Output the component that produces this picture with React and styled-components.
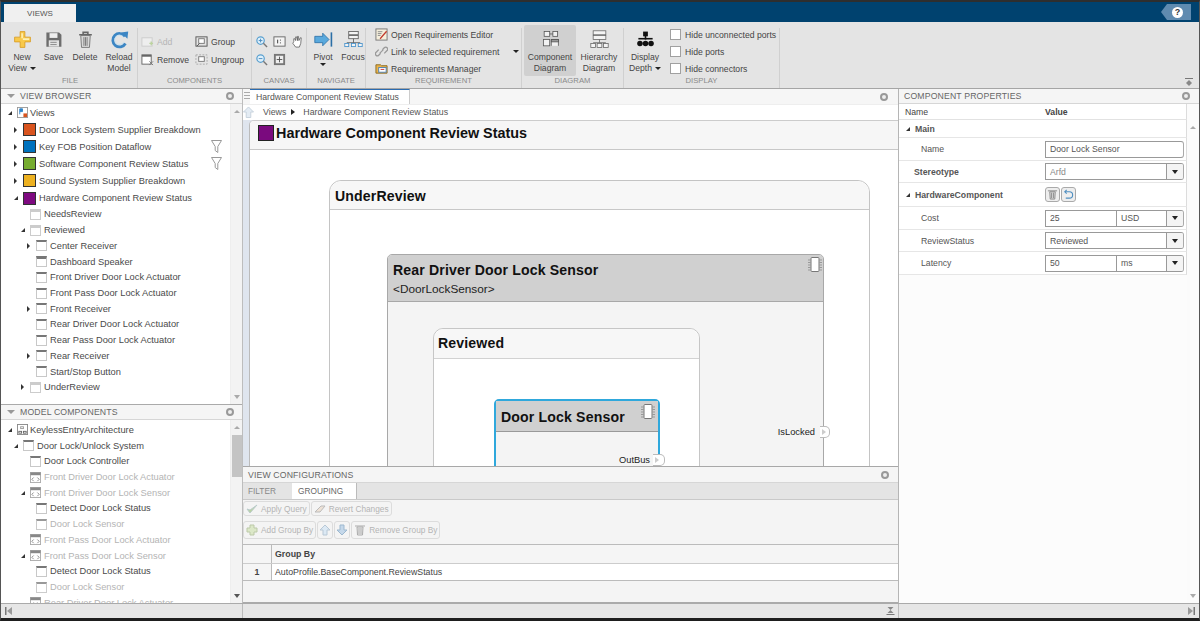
import React from "react";
import styled, { createGlobalStyle } from "styled-components";

const Global = createGlobalStyle`
  html, body { margin: 0; padding: 0; background: #222; overflow: hidden; }
  * { box-sizing: border-box; }
`;

const Page = styled.div`
  width: 1200px; height: 621px; overflow: hidden;
  display: flex; flex-direction: column;
  border-top: 2px solid #2e2e2e; border-bottom: 3px solid #1e1e1e;
  border-left: 1px solid #555; border-right: 1px solid #555;
  font-family: "Liberation Sans", Arial, sans-serif; font-size: 9.3px; color: #3c3c3c;
  background: #fff;
`;
const TitleBar = styled.div`
  height: 20px; background: #00426f; display: flex; align-items: flex-end; justify-content: space-between;
  flex: none; padding: 0 8px 0 3px;
`;
const RibbonTab = styled.div`
  width: 72px; height: 18px; background: #f0f0f0; color: #555; font-size: 8px;
  display: flex; align-items: center; justify-content: center;
`;
const Help = styled.div`
  width: 30px; height: 16px; margin-bottom: 2px; background: #5f8bb0;
  clip-path: polygon(6px 0, 100% 0, 100% 100%, 6px 100%, 0 50%);
  display: flex; align-items: center; justify-content: center; padding-left: 3px;
`;
const HelpDot = styled.div`
  width: 11px; height: 11px; border-radius: 50%; background: #fff; color: #333; font-size: 9px; font-weight: bold;
  display: flex; align-items: center; justify-content: center;
`;
const Ribbon = styled.div`
  height: 67px; flex: none; display: flex; background: #e4e4e4; border-bottom: 1px solid #a5a5a5;
  padding-left: 2px; position: relative;
`;
const Group = styled.div`
  width: ${p => p.$w}px; flex: none; display: flex; flex-direction: column;
  border-right: 1px solid #d0d0d0;
  margin-top: 6px;
`;
const GroupBody = styled.div`
  flex: 1; display: flex; padding: ${p => p.$pad || "0"}; gap: ${p => p.$gap || 0}px; min-height: 0;
`;
const GroupLabel = styled.div`
  height: 12px; flex: none; text-align: center; color: #8a8a8a; font-size: 7.7px; line-height: 10px;
`;
const BigBtn = styled.div`
  width: ${p => p.$w}px; flex: none; display: flex; flex-direction: column; align-items: center;
  text-align: center; line-height: 11px; font-size: 8.6px; border-radius: 2px; color: #444;
  margin-top: ${p => p.$active ? "-3px" : "0"};
  padding-top: ${p => p.$active ? "5px" : "2px"};
  height: ${p => p.$active ? "51px" : "auto"};
  background: ${p => p.$active ? "#d0d0d0" : "transparent"};
  svg { height: 19px; width: 21px; margin-bottom: 3px; flex: none; }
`;
const Caret = styled.span`
  display: inline-block; width: 0; height: 0; border-left: 3px solid transparent; border-right: 3px solid transparent;
  border-top: 3px solid #222; margin-left: ${p => p.$gap ?? 3}px; vertical-align: middle;
`;
const SmallCol = styled.div`
  display: flex; flex-direction: column; gap: ${p => p.$gap ?? 5}px; padding-top: ${p => p.$top ?? 6}px;
  ${p => p.$w ? `width: ${p.$w}px;` : ""} flex: none;
`;
const SmallBtn = styled.div`
  display: flex; align-items: center; height: 13px; flex: none; gap: 3px; white-space: nowrap; font-size: 8.65px;
  color: ${p => p.$off ? "#b5b5b5" : "#444"};
  svg { width: 13px; height: 13px; flex: none; }
`;
const CanvasTools = styled.div`
  display: grid; grid-template-columns: repeat(3, 18px); grid-auto-rows: 18px; padding: 4px 0 0 0; align-items: center; justify-items: center;
  svg { width: 13px; height: 13px; }
`;
const Checkbox = styled.span`
  width: 11px; height: 11px; background: #fff; border: 1px solid #a0a0a0; flex: none; margin-right: 1px;
`;
const Collapse = styled.div`
  position: absolute; right: 6px; bottom: 2px; width: 8px; height: 8px;
  svg { display: block; }
`;

const Main = styled.div`
  flex: 1; display: flex; min-height: 0;
`;
const LeftCol = styled.div`
  width: 242px; flex: none; display: flex; flex-direction: column; border-right: 1px solid #bdbdbd;
`;
const Panel = styled.div`
  height: ${p => p.$h ? p.$h + "px" : "auto"}; flex: ${p => p.$h ? "none" : 1}; min-height: 0;
  display: flex; flex-direction: column; overflow: hidden; background: #fff;
  border-bottom: ${p => p.$line ? "1px solid #aaa" : "none"};
`;
const PanelHead = styled.div`
  height: ${p => p.$h || 15}px; flex: none; display: flex; align-items: center; background: #f5f5f5; border-bottom: 1px solid #d6d6d6;
  color: #666; font-size: 8.7px; letter-spacing: 0.15px; padding: 0 ${p => p.$right ?? 8}px 0 ${p => p.$left ?? 6}px;
`;
const HeadTri = styled.span`
  width: 0; height: 0; border-left: 4px solid transparent; border-right: 4px solid transparent; border-top: 4px solid #999; margin-right: 5px;
`;
const Gear = styled.span`
  width: 8px; height: 8px; border-radius: 50%; border: 2px solid #999; background: #eee; margin-left: auto; flex: none; align-self: center;
`;
const TreeWrap = styled.div`
  flex: 1; display: flex; min-height: 0; overflow: hidden;
`;
const Tree = styled.div`
  flex: 1; min-width: 0; overflow: hidden; padding-top: ${p => p.$top || 0}px;
`;
const Row = styled.div`
  height: ${p => p.$tall ? 17.1 : 15.72}px; display: flex; align-items: center; white-space: nowrap;
  padding-left: ${p => p.$pad}px; padding-right: 5px;
  color: ${p => p.$off ? "#b4b4b4" : "#4a4a4a"}; font-size: 9.3px;
`;
const Arrow = styled.span`
  width: 9px; flex: none; height: 6px; display: flex; align-items: center;
  &::before {
    content: ""; display: ${p => p.$dir ? "block" : "none"};
    ${p => p.$dir === "open"
      ? "border-bottom: 4px solid #333; border-left: 4px solid transparent;"
      : "border-left: 3px solid #333; border-top: 3px solid transparent; border-bottom: 3px solid transparent;"}
  }
`;
const Swatch = styled.span`
  width: 13px; height: 13px; background: ${p => p.$c}; border: 1px solid #333; flex: none; margin-right: 3px;
`;
const CompIcon = styled.span`
  width: 11px; height: 11px; flex: none; margin-right: 3px; background: #fff; border: 1px solid ${p => p.$off ? "#ccc" : "#c8c8c8"};
  border-top: ${p => p.$heavy ? 3 : 2}px solid ${p => p.$off ? "#999" : "#777"};
`;
const ViewIcon = styled.span`
  width: 11px; height: 11px; flex: none; margin-right: 3px; background: #fff; border: 1px solid #ccc; border-top-width: 3px; border-top-color: #ccc;
`;
const SvgSlot = styled.span`
  width: 11px; height: 11px; flex: none; margin-right: ${p => p.$gap ?? 2}px; display: flex;
  svg { width: 11px; height: 11px; }
`;
const FilterSlot = styled.span`
  margin-left: auto; display: flex; margin-right: 3px;
  svg { width: 11px; height: 13px; }
`;
const Scroll = styled.div`
  width: 12px; flex: none; background: #f3f3f3; display: flex; flex-direction: column; align-items: center; padding-top: 6px; border-left: 1px solid #eee;
`;
const ScrollUp = styled.span`
  width: 0; height: 0; border-left: 3px solid transparent; border-right: 3px solid transparent; border-bottom: 3px solid #aaa; flex: none;
`;
const ScrollThumb = styled.div`
  width: 10px; height: 42px; background: #c4c4c4; margin-top: 6px; flex: none;
`;
const ScrollDown = styled.span`
  margin-top: auto; margin-bottom: 5px; width: 0; height: 0; border-left: 3px solid transparent; border-right: 3px solid transparent; border-top: 4px solid ${p => p.$c || "#555"}; flex: none;
`;

const CenterCol = styled.div`
  width: 655px; flex: none; display: flex; flex-direction: column; min-height: 0;
`;
const TabBar = styled.div`
  height: 16px; flex: none; display: flex; background: #f6f6f6; align-items: stretch; padding-right: 10px; border-bottom: 1px solid #eee;
`;
const Grip = styled.span`
  width: 6px; flex: none; margin: 3px 0 3px 1px; background: repeating-linear-gradient(#aaa 0 1px, transparent 1px 3px);
`;
const DocTab = styled.div`
  width: 160px; background: #fff; border-top: 1px solid #2a6bb0; border-right: 1px solid #ccc; padding-left: 6px; display: flex; align-items: center; color: #555; font-size: 8.7px; white-space: nowrap;
`;
const CrumbBar = styled.div`
  height: 15px; flex: none; display: flex; align-items: center; background: #fff; color: #555; font-size: 8.8px; gap: 5px; padding-bottom: 2px;
  svg { width: 11px; height: 12px; margin-right: 4px; flex: none; }
`;
const CrumbArrow = styled.span`
  border-left: 4px solid #222; border-top: 3px solid transparent; border-bottom: 3px solid transparent; margin-right: 3px;
`;
const CanvasFrame = styled.div`
  flex: 1; min-height: 0; overflow: hidden; display: flex; background: #dfe5ee;
  padding-left: 6px; border-bottom: 1px solid #a8a8a8;
`;
const CanvasInner = styled.div`
  flex: 1; overflow: hidden; background: #fff; border-left: 1px solid #bbb; border-top: 1px solid #ccc; border-top-left-radius: 5px;
`;
const DiagramHead = styled.div`
  height: 29px; background: #f6f6f6; border-bottom: 1px solid #c8c8c8; display: flex; align-items: center; padding: 0 0 4px 8px; gap: 2px;
  color: #111; font-weight: bold; font-size: 14.4px;
`;
const HeadSwatch = styled.span`
  width: 16px; height: 16px; background: #7a0a7e; border: 1px solid #222; flex: none;
`;
const Stage = styled.div`
  padding: 30px 0 0 79px;
`;
const Box = styled.div`
  position: relative; background: ${p => p.$bg};
  margin: ${p => p.$m || "0"}; width: ${p => p.$w}px; min-height: ${p => p.$min || 0}px;
  border: ${p => p.$bw || 1}px solid ${p => p.$line};
  border-radius: ${p => p.$r}px ${p => p.$r}px 0 0;
`;
const BoxHead = styled.div`
  height: ${p => p.$h}px; background: ${p => p.$bg}; border-bottom: 1px solid ${p => p.$line};
  border-radius: ${p => p.$r || 0}px ${p => p.$r || 0}px 0 0;
  padding: ${p => p.$pad}; color: #111; position: relative;
`;
const BoxTitle = styled.div`
  font-weight: bold; font-size: 14.1px; line-height: 16px; letter-spacing: 0.15px;
`;
const BoxSub = styled.div`
  font-size: 11.8px; margin-top: 4px; color: #222;
`;
const Chip = styled.span`
  position: absolute; right: ${p => p.$r}px; top: ${p => p.$t}px;
  svg { display: block; width: 14px; height: 15px; }
`;
const Port = styled.div`
  position: absolute; top: ${p => p.$t}px; right: ${p => p.$out}px; display: flex; align-items: center; gap: ${p => p.$gap}px; font-size: 9.3px; color: #222;
`;
const PortTab = styled.span`
  width: ${p => p.$w}px; height: 12px; background: #fff; border: 1px solid #bbb; border-left: none; border-radius: 0 5px 5px 0; display: flex; align-items: center; padding-left: 2px;
  &::before { content: ""; border-left: 4px solid #ccc; border-top: 3px solid transparent; border-bottom: 3px solid transparent; }
`;

const ConfigPanel = styled.div`
  height: 136px; flex: none; display: flex; flex-direction: column; background: #f4f4f4; border-bottom: 1px solid #aaa;
`;
const ConfigTabs = styled.div`
  height: 17px; flex: none; display: flex; background: #e4e4e4; border-bottom: 1px solid #c9c9c9; font-size: 8.3px;
`;
const ConfigTab = styled.div`
  width: ${p => p.$w}px; display: flex; align-items: center; padding-left: ${p => p.$pad}px;
  color: ${p => p.$on ? "#666" : "#888"}; background: ${p => p.$on ? "#fff" : "#e4e4e4"};
  border-right: ${p => p.$on ? "1px solid #bbb" : "none"};
`;
const ToolRow = styled.div`
  display: flex; height: ${p => p.$h}px; margin-top: ${p => p.$top || 0}px; gap: 1px; flex: none;
`;
const GhostBtn = styled.div`
  height: 100%; display: flex; align-items: center; gap: ${p => p.$gap ?? 3}px; padding: 0 ${p => p.$pad ?? 2}px; color: #b4b4b4; border: 1px solid #dcdcdc; border-radius: 3px; white-space: nowrap; font-size: 8.3px;
  svg { width: 12px; height: 12px; flex: none; }
`;
const GroupTable = styled.div`
  margin-top: 5px; border-top: 1px solid #bbb; border-bottom: 1px solid #bbb; background: #fff; flex: none;
`;
const GRow = styled.div`
  display: flex; height: ${p => p.$h}px; background: ${p => p.$head ? "#f5f5f5" : "#fff"}; align-items: stretch;
  border-bottom: ${p => p.$head ? "1px solid #ccc" : "none"}; font-size: 8.8px; color: #444;
`;
const GIndex = styled.div`
  width: 29px; border-right: 1px solid #bbb; background: #f5f5f5; display: flex; align-items: center; justify-content: center; font-weight: bold;
`;
const GCell = styled.div`
  flex: 1; display: flex; align-items: center; padding-left: 3px; font-weight: ${p => p.$bold ? "bold" : "normal"};
`;

const RightCol = styled.div`
  flex: 1; min-width: 0; display: flex; flex-direction: column; border-left: 1px solid #b5b5b5; background: #fff;
`;
const PropWrap = styled.div`
  flex: 1; display: flex; min-height: 0;
`;
const PropBody = styled.div`
  width: 288px; flex: none; background: #fcfcfc;
`;
const PropRail = styled.div`
  flex: 1; display: flex; flex-direction: column; align-items: center; background: #fbfbfb; padding-top: 22px;
`;
const PropHead = styled.div`
  height: 16px; display: flex; align-items: center; font-weight: bold; font-size: 8.7px; color: #444; border-bottom: 1px solid #e2e2e2; border-right: 1px solid #dcdcdc; padding-left: 6px; background: #fff;
`;
const PropNameCol = styled.div`
  width: ${p => p.$w}px; flex: none; padding-left: ${p => p.$pad || 0}px; display: flex; align-items: center; gap: 5px; white-space: nowrap;
  font-weight: ${p => p.$bold ? "bold" : "normal"};
`;
const PropRow = styled.div`
  display: flex; height: ${p => p.$h}px; align-items: center; border-bottom: 1px solid #e6e6e6; border-right: 1px solid #dcdcdc; font-size: 8.7px; color: #555; padding-left: 4px; background: #fff;
`;
const Triangle = styled.span`
  border-bottom: 4px solid #333; border-left: 4px solid transparent;
`;
const Field = styled.div`
  width: 139px; height: 17px; display: flex; border: 1px solid #999; border-right-color: #aaa; background: #fff; border-radius: 0 3px 3px 0; overflow: hidden;
  color: ${p => p.$dim ? "#888" : "#555"};
`;
const FieldText = styled.div`
  padding-left: 4px; display: flex; align-items: center; min-width: 0; border-left: ${p => p.$split ? "1px solid #999" : "none"};
  width: ${p => p.$w ? p.$w + "px" : "auto"}; flex: ${p => p.$w ? "none" : 1};
`;
const FieldBtn = styled.div`
  width: 17px; flex: none; border-left: 1px solid #999; background: #f4f4f4; display: flex; align-items: center; justify-content: center;
  &::before { content: ""; border-top: 4px solid #222; border-left: 3.5px solid transparent; border-right: 3.5px solid transparent; }
`;
const MiniBtn = styled.span`
  width: 15px; height: 15px; border: 1px solid #aaa; border-radius: 3px; background: #eee; display: flex; align-items: center; justify-content: center;
  svg { width: 11px; height: 11px; }
`;
const MiniGroup = styled.div`
  display: flex; gap: 1px;
`;
const StatusBar = styled.div`
  height: 15px; flex: none; background: #e6e6e6; border-top: 1px solid #aaa; display: flex;
`;
const StatusCell = styled.div`
  width: ${p => p.$w ? p.$w + "px" : "auto"}; flex: ${p => p.$w ? "none" : 1}; display: flex; align-items: center;
  justify-content: ${p => p.$end ? "flex-end" : "flex-start"}; padding: 0 ${p => p.$r ?? 4}px 0 4px;
  border-right: ${p => p.$line ? "1px solid #bbb" : "none"};
  svg { width: 9px; height: 8px; display: block; }
`;

const I = {
  Plus: () => <svg viewBox="0 0 24 24"><path d="M9 2h6v7h7v6h-7v7H9v-7H2V9h7z" fill="#f8c94a" stroke="#d89a20" strokeWidth="1"/><path d="M10.5 4h2v6.500h8v2h-8v-2h-2z" fill="#fdf0b5"/></svg>,
  Save: () => <svg viewBox="0 0 24 24"><path d="M3 3h16l3 3v15H3z" fill="#6d6d6d"/><rect x="7" y="4" width="10" height="6" fill="#efefef"/><rect x="6" y="13" width="13" height="8" fill="#e3e3e3"/><rect x="8" y="15" width="8" height="1" fill="#777"/><rect x="8" y="18" width="8" height="1" fill="#777"/></svg>,
  Trash: () => <svg viewBox="0 0 24 24"><path d="M4 6h16M9 5V3h6v2" stroke="#666" strokeWidth="2" fill="none"/><path d="M6 7h12l-1 15H7z" fill="#d8d8d8" stroke="#666"/><path d="M10 9v11M12 9v11M14 9v11" stroke="#666"/></svg>,
  Reload: () => <svg viewBox="0 0 24 24"><path d="M19 8a8.500 8.500 0 1 0 .5 9" fill="none" stroke="#3c86c4" strokeWidth="3.500"/><path d="M14 3l9-1-1 9z" fill="#3c86c4"/><path d="M17 9a6 6 0 1 0 .5 6" fill="none" stroke="#bfe0f5" strokeWidth="1"/></svg>,
  Pivot: () => <svg viewBox="0 0 24 24"><path d="M1 8h10V4l8 8-8 8v-4H1z" fill="#59a9dd" stroke="#2a6ea6"/><rect x="21" y="3" width="2" height="18" fill="#2a6ea6"/></svg>,
  Focus: () => <svg viewBox="0 0 24 24" fill="#f4f4f4" stroke="#555"><rect x="6" y="2" width="12" height="4"/><rect x="6" y="7" width="12" height="4"/><path d="M12 11v5M3.500 16h17" /><rect x="1" y="17" width="5" height="4" stroke="#3b8bc9"/><rect x="9.500" y="17" width="5" height="4" stroke="#3b8bc9"/><rect x="18" y="17" width="5" height="4" stroke="#3b8bc9"/></svg>,
  CompDiag: () => <svg viewBox="0 0 24 24" fill="#f2f2f2" stroke="#555"><rect x="4" y="2" width="7" height="6"/><rect x="15" y="2" width="6" height="6"/><path d="M11 5h4"/><rect x="3" y="12" width="8" height="8"/><path d="M13 20v-8h9v8" /><rect x="13" y="12" width="9" height="3" fill="#999"/></svg>,
  HierDiag: () => <svg viewBox="0 0 24 24" fill="#f4f4f4" stroke="#666"><rect x="4" y="1" width="16" height="5"/><rect x="4" y="7" width="16" height="5"/><path d="M12 12v4M4 16h16"/><rect x="1" y="17" width="6" height="5"/><rect x="9" y="17" width="6" height="5"/><rect x="17" y="17" width="6" height="5"/></svg>,
  Depth: () => <svg viewBox="0 0 24 24" fill="#111"><rect x="9" y="2" width="6" height="6"/><rect x="3" y="10" width="18" height="2"/><rect x="11" y="7" width="2" height="5"/><circle cx="5" cy="17" r="3.500"/><circle cx="12" cy="17" r="3.500"/><circle cx="19" cy="17" r="3.500"/></svg>,
  AddC: () => <svg viewBox="0 0 14 14"><rect x="1" y="3" width="11" height="9" fill="#eee" stroke="#ccc"/><path d="M9 9h4M11 7v4" stroke="#bcd3a0" strokeWidth="1.500"/></svg>,
  RemC: () => <svg viewBox="0 0 14 14"><rect x="1" y="2" width="10" height="10" fill="#fff" stroke="#666"/><rect x="1" y="2" width="10" height="2" fill="#666"/><path d="M9 9l4 4M13 9l-4 4" stroke="#777"/></svg>,
  GroupI: () => <svg viewBox="0 0 14 14"><rect x="1" y="2" width="12" height="10" fill="none" stroke="#555"/><rect x="4" y="4" width="6" height="5" fill="#fff" stroke="#777"/><path d="M2 12l3-3" stroke="#555"/></svg>,
  Ungroup: () => <svg viewBox="0 0 14 14"><rect x="1" y="2" width="12" height="10" fill="none" stroke="#aaa" strokeDasharray="2 1.500"/><rect x="4" y="4" width="6" height="5" fill="#fff" stroke="#777"/></svg>,
  ZoomIn: () => <svg viewBox="0 0 14 14"><circle cx="6" cy="6" r="4" fill="#dff0fb" stroke="#5aa0cf" strokeWidth="1.300"/><path d="M9 9l4 4" stroke="#777" strokeWidth="1.500"/><path d="M4 6h4M6 4v4" stroke="#4a8bbd"/></svg>,
  ZoomOut: () => <svg viewBox="0 0 14 14"><circle cx="6" cy="6" r="4" fill="#dff0fb" stroke="#5aa0cf" strokeWidth="1.300"/><path d="M9 9l4 4" stroke="#777" strokeWidth="1.500"/><path d="M4 6h4" stroke="#4a8bbd"/></svg>,
  Fit: () => <svg viewBox="0 0 14 14"><rect x="1" y="2" width="12" height="10" fill="#f4f4f4" stroke="#666"/><path d="M5 5v4M8 5v1M8 8v1" stroke="#333"/></svg>,
  Fill: () => <svg viewBox="0 0 14 14"><rect x="1" y="1" width="12" height="12" fill="#777"/><rect x="3" y="3" width="8" height="8" fill="#eee"/><path d="M4 7h6M7 4v6" stroke="#555"/></svg>,
  Hand: () => <svg viewBox="0 0 14 14"><path d="M3 7V4l1 0 1 2V2l1 0 1 4V1.500h1L8.500 6 10 3h1l-.5 6-1.500 4H5L2 9z" fill="#fff" stroke="#555" strokeWidth=".8"/></svg>,
  Edit: () => <svg viewBox="0 0 14 14"><rect x="1" y="1" width="12" height="12" fill="#f5efdc" stroke="#777"/><path d="M3 4h5M3 6h4M3 8h3" stroke="#888"/><path d="M5 11l7-8 1 1-7 8z" fill="#c0392b"/></svg>,
  Link: () => <svg viewBox="0 0 14 14" fill="none" stroke="#999" strokeWidth="1.400"><path d="M6 9l-2 2a2 2 0 0 1-3-3l3-3"/><path d="M8 5l2-2a2 2 0 0 1 3 3l-3 3"/><path d="M5 9l4-4"/></svg>,
  Req: () => <svg viewBox="0 0 14 14"><path d="M1 3h5l1 1h6v8H1z" fill="#e9b44c" stroke="#8a6a20"/><rect x="4" y="6" width="8" height="5" fill="#fff" stroke="#4a7fb5"/><path d="M6 8h4" stroke="#c33"/></svg>,
  Filter: () => <svg viewBox="0 0 11 13"><path d="M.5.500h10L6.800 6.500V12.500L4.200 10.500V6.500z" fill="#fff" stroke="#999"/></svg>,
  Views: () => <svg viewBox="0 0 12 12"><rect x=".5" y=".5" width="11" height="11" fill="#fff" stroke="#999"/><path d="M3 2v6M3 2h3v3H3" fill="#2f84c9" stroke="#2f84c9"/><rect x="7" y="7" width="4" height="4" fill="#d9541e"/></svg>,
  Arch: () => <svg viewBox="0 0 12 12"><rect x=".5" y=".5" width="11" height="11" fill="#fff" stroke="#888"/><rect x="2" y="8" width="3" height="2" fill="none" stroke="#666"/><rect x="7" y="8" width="3" height="2" fill="none" stroke="#666"/><rect x="4" y="3" width="3" height="2" fill="none" stroke="#999"/></svg>,
  Ref: () => <svg viewBox="0 0 12 12"><rect x=".5" y=".5" width="11" height="11" fill="#fff" stroke="#aaa"/><rect x=".5" y=".5" width="11" height="3" fill="#888"/><path d="M2 8l2-2M2 8l2 2M10 8L8 6M10 8l-2 2" stroke="#888" fill="none"/></svg>,
  Chip: () => <svg viewBox="0 0 14 15" fill="#fff" stroke="#777"><rect x="3" y=".5" width="8" height="14" rx="1"/><path d="M0 3h3M0 5.500h3M0 8h3M0 10.500h3M0 13h3M11 3h3M11 5.500h3M11 8h3M11 10.500h3M11 13h3" stroke="#999"/></svg>,
  Up: () => <svg viewBox="0 0 12 12"><path d="M6 1l5 5H8v5H4V6H1z" fill="#dce9f4" stroke="#b8c8d6"/></svg>,
  Down: () => <svg viewBox="0 0 12 12"><path d="M6 11l5-5H8V1H4v5H1z" fill="#c5d8ea" stroke="#9db8cf"/></svg>,
  Check: () => <svg viewBox="0 0 12 12"><path d="M1 6l3 4 7-8-7 5z" fill="#b8d29d" stroke="#bcc"/></svg>,
  Erase: () => <svg viewBox="0 0 12 12"><path d="M1 9l6-6h4l-5 6z" fill="#eee2d6" stroke="#bbb"/></svg>,
  PlusG: () => <svg viewBox="0 0 12 12"><path d="M4 1h4v3h3v4H8v3H4V8H1V4h3z" fill="#dce8c8" stroke="#bcc9a8"/></svg>,
  Bin: () => <svg viewBox="0 0 12 12"><path d="M1 2h10M3 3h6l-.5 8h-5z" fill="#eee" stroke="#aaa"/><path d="M5 4v6M7 4v6" stroke="#aaa"/></svg>,
  BinD: () => <svg viewBox="0 0 12 12"><path d="M1 2h10M3 3h6l-.5 8h-5z" fill="#ddd" stroke="#888"/><path d="M5 4v6M7 4v6" stroke="#888"/></svg>,
  Revert: () => <svg viewBox="0 0 12 12" fill="none" stroke="#4f8fc1" strokeWidth="1.200"><path d="M2 3h5a3 3 0 0 1 0 7H3"/><path d="M4 1L2 3l2 2"/></svg>,
  PinTop: () => <svg viewBox="0 0 8 8" width="8" height="8"><rect width="8" height="1" fill="#777"/><path d="M4 2l3 3H1z" fill="#888"/><path d="M1 5h6l-3 3z" fill="#888"/></svg>,
  PinBottom: () => <svg viewBox="0 0 8 8"><path d="M1 0h6L4 3z" fill="#888"/><path d="M4 3l3 3H1z" fill="#888"/><rect y="7" width="8" height="1" fill="#777"/></svg>,
  UpBlue: () => <svg viewBox="0 0 12 12"><path d="M6 .5l5.500 5.500H8.500v6h-5V6H.5z" fill="#e4ecf4" stroke="#c5d0db"/></svg>,
  ToStart: () => <svg viewBox="0 0 9 8"><rect x="0" width="1.500" height="8" fill="#777"/><path d="M7 0v8L2 4z" fill="#999"/></svg>,
  ToEnd: () => <svg viewBox="0 0 9 8"><rect x="7.500" width="1.500" height="8" fill="#777"/><path d="M2 0v8l5-4z" fill="#999"/></svg>,
};

const viewRows = [
  { tall: 1, pad: 7, dir: "open", svg: I.Views, t: "Views" },
  { tall: 1, pad: 13, dir: "right", c: "#d9541e", t: "Door Lock System Supplier Breakdown" },
  { tall: 1, pad: 13, dir: "right", c: "#0072bd", t: "Key FOB Position Dataflow", filter: 1 },
  { tall: 1, pad: 13, dir: "right", c: "#77ac30", t: "Software Component Review Status", filter: 1 },
  { tall: 1, pad: 13, dir: "right", c: "#edb120", t: "Sound System Supplier Breakdown" },
  { tall: 1, pad: 13, dir: "open", c: "#7e0a80", t: "Hardware Component Review Status" },
  { pad: 20, view: 1, t: "NeedsReview" },
  { pad: 20, dir: "open", view: 1, t: "Reviewed" },
  { pad: 26, dir: "right", comp: 1, t: "Center Receiver" },
  { pad: 26, comp: 1, heavy: 1, t: "Dashboard Speaker" },
  { pad: 26, comp: 1, t: "Front Driver Door Lock Actuator" },
  { pad: 26, comp: 1, t: "Front Pass Door Lock Actuator" },
  { pad: 26, dir: "right", comp: 1, t: "Front Receiver" },
  { pad: 26, comp: 1, t: "Rear Driver Door Lock Actuator" },
  { pad: 26, comp: 1, t: "Rear Pass Door Lock Actuator" },
  { pad: 26, dir: "right", comp: 1, t: "Rear Receiver" },
  { pad: 26, comp: 1, t: "Start/Stop Button" },
  { pad: 20, dir: "right", view: 1, t: "UnderReview" },
];
const modelRows = [
  { pad: 7, dir: "open", svg: I.Arch, t: "KeylessEntryArchitecture" },
  { pad: 13, dir: "open", comp: 1, t: "Door Lock/Unlock System" },
  { pad: 20, comp: 1, t: "Door Lock Controller" },
  { pad: 20, svg: I.Ref, off: 1, gap: 3, t: "Front Driver Door Lock Actuator" },
  { pad: 20, dir: "open", svg: I.Ref, off: 1, gap: 3, t: "Front Driver Door Lock Sensor" },
  { pad: 26, comp: 1, t: "Detect Door Lock Status" },
  { pad: 26, comp: 1, off: 1, t: "Door Lock Sensor" },
  { pad: 20, svg: I.Ref, off: 1, gap: 3, t: "Front Pass Door Lock Actuator" },
  { pad: 20, dir: "open", svg: I.Ref, off: 1, gap: 3, t: "Front Pass Door Lock Sensor" },
  { pad: 26, comp: 1, t: "Detect Door Lock Status" },
  { pad: 26, comp: 1, off: 1, t: "Door Lock Sensor" },
  { pad: 20, svg: I.Ref, off: 1, gap: 3, t: "Rear Driver Door Lock Actuator" },
];

const TreeRow = ({ r }) => (
  <Row $tall={r.tall} $pad={r.pad} $off={r.off}>
    <Arrow $dir={r.dir} />
    {r.c && <Swatch $c={r.c} />}
    {r.svg && <SvgSlot $gap={r.gap}><r.svg /></SvgSlot>}
    {r.view && <ViewIcon />}
    {r.comp && <CompIcon $heavy={r.heavy} $off={r.off} />}
    {r.t}
    {r.filter && <FilterSlot><I.Filter /></FilterSlot>}
  </Row>
);

export default function App() {
  return (
    <Page>
      <Global />
      <TitleBar>
        <RibbonTab>VIEWS</RibbonTab>
        <Help><HelpDot>?</HelpDot></Help>
      </TitleBar>
      <Ribbon>
        <Group $w={135}>
          <GroupBody $pad="0 0 0 3px">
            <BigBtn $w={32}><I.Plus />New<span>View<Caret /></span></BigBtn>
            <BigBtn $w={31}><I.Save />Save</BigBtn>
            <BigBtn $w={32}><I.Trash />Delete</BigBtn>
            <BigBtn $w={36}><I.Reload />Reload<span>Model</span></BigBtn>
          </GroupBody>
          <GroupLabel>FILE</GroupLabel>
        </Group>
        <Group $w={114}>
          <GroupBody $pad="0 0 0 3px">
            <SmallCol $w={54} $top={7}>
              <SmallBtn $off><I.AddC />Add</SmallBtn>
              <SmallBtn><I.RemC />Remove</SmallBtn>
            </SmallCol>
            <SmallCol $top={7}>
              <SmallBtn><I.GroupI />Group</SmallBtn>
              <SmallBtn><I.Ungroup />Ungroup</SmallBtn>
            </SmallCol>
          </GroupBody>
          <GroupLabel>COMPONENTS</GroupLabel>
        </Group>
        <Group $w={55}>
          <GroupBody>
            <CanvasTools>
              <I.ZoomIn /><I.Fit /><I.Hand />
              <I.ZoomOut /><I.Fill />
            </CanvasTools>
          </GroupBody>
          <GroupLabel>CANVAS</GroupLabel>
        </Group>
        <Group $w={59}>
          <GroupBody $pad="0 0 0 1px">
            <BigBtn $w={30}><I.Pivot />Pivot<Caret $gap={0} /></BigBtn>
            <BigBtn $w={30}><I.Focus />Focus</BigBtn>
          </GroupBody>
          <GroupLabel>NAVIGATE</GroupLabel>
        </Group>
        <Group $w={156}>
          <GroupBody $pad="0 0 0 9px">
            <SmallCol $gap={4} $top={0}>
              <SmallBtn><I.Edit />Open Requirements Editor</SmallBtn>
              <SmallBtn><I.Link />Link to selected requirement<Caret $gap={11} /></SmallBtn>
              <SmallBtn><I.Req />Requirements Manager</SmallBtn>
            </SmallCol>
          </GroupBody>
          <GroupLabel>REQUIREMENT</GroupLabel>
        </Group>
        <Group $w={102}>
          <GroupBody $pad="0 0 0 2px">
            <BigBtn $w={52} $active><I.CompDiag />Component<span>Diagram</span></BigBtn>
            <BigBtn $w={46}><I.HierDiag />Hierarchy<span>Diagram</span></BigBtn>
          </GroupBody>
          <GroupLabel>DIAGRAM</GroupLabel>
        </Group>
        <Group $w={156}>
          <GroupBody $pad="0 0 0 1px" $gap={5}>
            <BigBtn $w={40}><I.Depth />Display<span>Depth<Caret /></span></BigBtn>
            <SmallCol $gap={4} $top={0}>
              <SmallBtn><Checkbox />Hide unconnected ports</SmallBtn>
              <SmallBtn><Checkbox />Hide ports</SmallBtn>
              <SmallBtn><Checkbox />Hide connectors</SmallBtn>
            </SmallCol>
          </GroupBody>
          <GroupLabel>DISPLAY</GroupLabel>
        </Group>
        <Collapse><I.PinTop /></Collapse>
      </Ribbon>
      <Main>
        <LeftCol>
          <Panel $h={316} $line>
            <PanelHead><HeadTri />VIEW BROWSER<Gear /></PanelHead>
            <TreeWrap>
              <Tree>{viewRows.map((r, i) => <TreeRow key={i} r={r} />)}</Tree>
              <Scroll><ScrollUp /><ScrollDown $c="#aaa" /></Scroll>
            </TreeWrap>
          </Panel>
          <Panel>
            <PanelHead><HeadTri />MODEL COMPONENTS<Gear /></PanelHead>
            <TreeWrap>
              <Tree $top={2}>{modelRows.map((r, i) => <TreeRow key={i} r={r} />)}</Tree>
              <Scroll><ScrollUp /><ScrollThumb /><ScrollDown /></Scroll>
            </TreeWrap>
          </Panel>
        </LeftCol>
        <CenterCol>
          <TabBar>
            <Grip />
            <DocTab>Hardware Component Review Status</DocTab>
            <Gear />
          </TabBar>
          <CrumbBar>
            <I.UpBlue />
            <span>Views</span><CrumbArrow /><span>Hardware Component Review Status</span>
          </CrumbBar>
          <CanvasFrame>
            <CanvasInner>
              <DiagramHead><HeadSwatch />Hardware Component Review Status</DiagramHead>
              <Stage>
                <Box $w={541} $bg="#fff" $line="#c4c4c4" $r={12} $min={400}>
                  <BoxHead $h={29} $bg="#f7f7f7" $line="#c8c8c8" $r={12} $pad="7px 5px"><BoxTitle>UnderReview</BoxTitle></BoxHead>
                  <Box $w={437} $m="44px 0 0 57px" $bg="#f4f4f4" $line="#a8a8a8" $r={5} $min={300}>
                    <BoxHead $h={47} $bg="#d0d0d0" $line="#a8a8a8" $r={4} $pad="7px 5px">
                      <BoxTitle>Rear Driver Door Lock Sensor</BoxTitle>
                      <BoxSub>&lt;DoorLockSensor&gt;</BoxSub>
                      <Chip $r={1} $t={2}><I.Chip /></Chip>
                    </BoxHead>
                    <Box $w={267} $m="26px 0 0 45px" $bg="#fff" $line="#c6c6c6" $r={10} $min={200}>
                      <BoxHead $h={30} $bg="#f7f7f7" $line="#d2d2d2" $r={10} $pad="6px 4px"><BoxTitle>Reviewed</BoxTitle></BoxHead>
                      <Box $w={166} $m="40px 0 0 60px" $bg="#f4f4f4" $line="#2fa8dc" $bw={2} $r={5} $min={120}>
                        <BoxHead $h={31} $bg="#d0d0d0" $line="#999" $pad="8px 5px">
                          <BoxTitle>Door Lock Sensor</BoxTitle>
                          <Chip $r={3} $t={3}><I.Chip /></Chip>
                        </BoxHead>
                        <Port $t={53} $out={-7} $gap={3}>OutBus<PortTab $w={12} /></Port>
                      </Box>
                    </Box>
                    <Port $t={171} $out={-7} $gap={5}>IsLocked<PortTab $w={10} /></Port>
                  </Box>
                </Box>
              </Stage>
            </CanvasInner>
          </CanvasFrame>
          <ConfigPanel>
            <PanelHead $h={16} $left={5} $right={9}>VIEW CONFIGURATIONS<Gear /></PanelHead>
            <ConfigTabs>
              <ConfigTab $w={49} $pad={5}>FILTER</ConfigTab>
              <ConfigTab $w={65} $pad={6} $on>GROUPING</ConfigTab>
            </ConfigTabs>
            <ToolRow $h={15} $top={1}>
              <GhostBtn><I.Check />Apply Query</GhostBtn>
              <GhostBtn><I.Erase />Revert Changes</GhostBtn>
            </ToolRow>
            <ToolRow $h={18} $top={5}>
              <GhostBtn><I.PlusG />Add Group By</GhostBtn>
              <GhostBtn $pad={1}><I.Up /></GhostBtn>
              <GhostBtn $pad={1}><I.Down /></GhostBtn>
              <GhostBtn $gap={3}><I.Bin />Remove Group By</GhostBtn>
            </ToolRow>
            <GroupTable>
              <GRow $h={19} $head><GIndex /><GCell $bold>Group By</GCell></GRow>
              <GRow $h={16}><GIndex>1</GIndex><GCell>AutoProfile.BaseComponent.ReviewStatus</GCell></GRow>
            </GroupTable>
          </ConfigPanel>
        </CenterCol>
        <RightCol>
          <PanelHead $left={5} $right={9}>COMPONENT PROPERTIES<Gear /></PanelHead>
          <PropWrap>
            <PropBody>
              <PropHead><PropNameCol $w={140}>Name</PropNameCol>Value</PropHead>
              <PropRow $h={18}><PropNameCol $w={142} $pad={3} $bold><Triangle />Main</PropNameCol></PropRow>
              <PropRow $h={23}><PropNameCol $w={142} $pad={18}>Name</PropNameCol><Field><FieldText>Door Lock Sensor</FieldText></Field></PropRow>
              <PropRow $h={22}><PropNameCol $w={142} $pad={11} $bold>Stereotype</PropNameCol><Field $dim><FieldText>Arfd</FieldText><FieldBtn /></Field></PropRow>
              <PropRow $h={24}><PropNameCol $w={142} $pad={3} $bold><Triangle />HardwareComponent</PropNameCol><MiniGroup><MiniBtn><I.BinD /></MiniBtn><MiniBtn><I.Revert /></MiniBtn></MiniGroup></PropRow>
              <PropRow $h={23}><PropNameCol $w={142} $pad={18}>Cost</PropNameCol><Field><FieldText $w={70}>25</FieldText><FieldText $split>USD</FieldText><FieldBtn /></Field></PropRow>
              <PropRow $h={22}><PropNameCol $w={142} $pad={18}>ReviewStatus</PropNameCol><Field><FieldText>Reviewed</FieldText><FieldBtn /></Field></PropRow>
              <PropRow $h={23}><PropNameCol $w={142} $pad={18}>Latency</PropNameCol><Field><FieldText $w={70}>50</FieldText><FieldText $split>ms</FieldText><FieldBtn /></Field></PropRow>
            </PropBody>
            <PropRail><ScrollUp /><ScrollDown $c="#aaa" /></PropRail>
          </PropWrap>
        </RightCol>
      </Main>
      <StatusBar>
        <StatusCell $w={242} $line><I.ToStart /></StatusCell>
        <StatusCell $w={656} $line $end $r={3}><I.PinBottom /></StatusCell>
        <StatusCell $end $r={4}><I.ToEnd /></StatusCell>
      </StatusBar>
    </Page>
  );
}
